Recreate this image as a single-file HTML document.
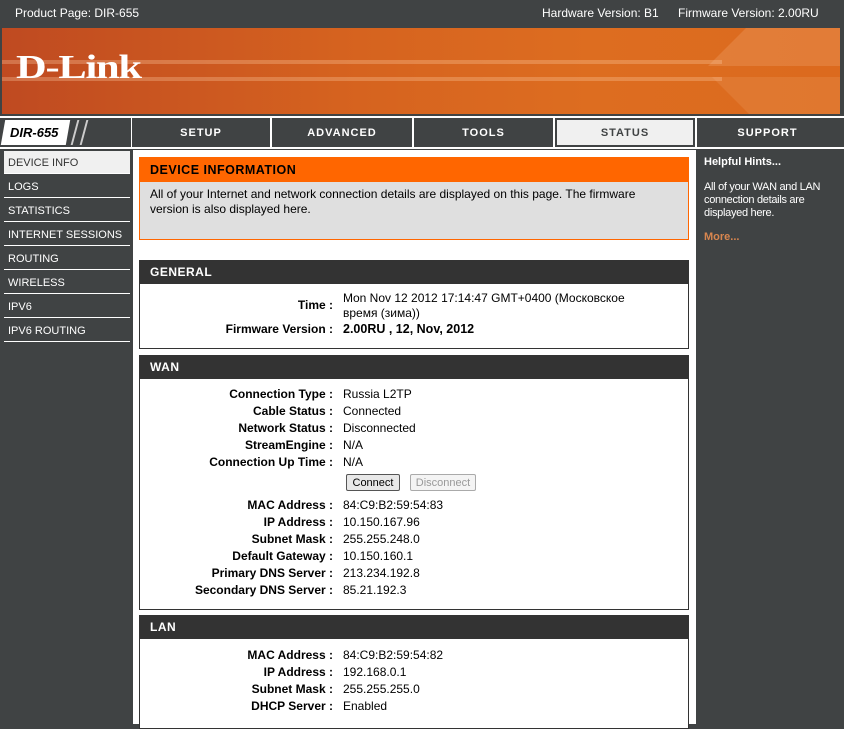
<!DOCTYPE html>
<html><head><meta charset="utf-8"><style>
*{margin:0;padding:0;box-sizing:border-box}
body{width:844px;height:724px;overflow:hidden;background:#404344;font-family:"Liberation Sans",sans-serif;font-size:12px;position:relative}
.a{position:absolute}
#top{left:2px;top:2px;width:838px;height:23px;background:#404344;color:#fff;font-size:12px;line-height:23px}
#ban{left:2px;top:28px;width:838px;height:86px;background:linear-gradient(90deg,#bf4a21 0%,#d5621f 40%,#dd6d20 70%,#dc6a1e 100%);overflow:hidden}
.wl{position:absolute;left:0;height:4px;background:rgba(255,210,170,.3)}
#logo{left:16px;top:49px;color:#fff;font:bold 34px "Liberation Serif",serif;letter-spacing:-1px;transform:scaleX(1.25);transform-origin:left top}
.tab{position:absolute;top:118px;height:29px;background:#404344;color:#fff;font-weight:bold;font-size:11px;letter-spacing:1px;text-align:center;line-height:30px}
.side{position:absolute;left:4px;width:126px;height:23px;border-bottom:1px solid #fff;color:#fff;font-size:11px;line-height:24px;padding-left:4px}
.hd{position:absolute;left:139px;width:550px;height:24px;background:#333;color:#fff;font-weight:bold;font-size:12px;line-height:24px;padding-left:11px;letter-spacing:.5px}
.bx{position:absolute;left:139px;width:550px;background:#fff;border:1px solid #333;border-top:0}
.l{position:absolute;right:511px;font-weight:bold;color:#000;white-space:nowrap;text-align:right}
.v{position:absolute;left:343px;color:#000;white-space:nowrap}
</style></head><body>
<div class="a" id="top"><span class="a" style="left:13px">Product Page: DIR-655</span><span class="a" style="left:540px">Hardware Version: B1</span><span class="a" style="left:676px">Firmware Version: 2.00RU</span></div>
<div class="a" id="ban">
<div class="wl" style="top:32px;width:720px"></div>
<div class="wl" style="top:49px;width:720px"></div>
<div class="a" style="left:730px;top:-10px;width:160px;height:48px;background:rgba(255,210,170,.18);transform:skewX(-45deg)"></div>
<div class="a" style="left:730px;top:49px;width:160px;height:40px;background:rgba(255,210,170,.12);transform:skewX(45deg)"></div>
</div>
<div class="a" id="logo">D-Link</div>
<div class="a" style="left:0;top:116px;width:844px;height:33px;background:#fff"></div>
<div class="a" style="left:0;top:118px;width:131px;height:29px;background:#404344"></div>
<div class="a" style="left:3px;top:120px;width:65px;height:25px;background:#fff;transform:skewX(-10deg)"></div>
<div class="a" style="left:10px;top:120px;line-height:26px;font-weight:bold;font-style:italic;font-size:13px;color:#000">DIR-655</div>
<div class="a" style="left:74px;top:120px;width:2px;height:25px;background:#ccc;transform:skewX(-15deg)"></div>
<div class="a" style="left:83px;top:120px;width:2px;height:25px;background:#ccc;transform:skewX(-15deg)"></div>
<div class="tab" style="left:132px;width:138px">SETUP</div>
<div class="tab" style="left:272px;width:140px">ADVANCED</div>
<div class="tab" style="left:414px;width:139px">TOOLS</div>
<div class="tab" style="left:555px;width:140px"><div style="margin:2px 2px;height:25px;background:#f0f0f0;color:#404344;line-height:26px">STATUS</div></div>
<div class="tab" style="left:697px;width:141px">SUPPORT</div>
<div class="a" style="left:838px;top:118px;width:6px;height:29px;background:#404344"></div>
<div class="side" style="top:151px;background:#f0f0f0;color:#333">DEVICE INFO</div>
<div class="side" style="top:175px">LOGS</div>
<div class="side" style="top:199px">STATISTICS</div>
<div class="side" style="top:223px">INTERNET SESSIONS</div>
<div class="side" style="top:247px">ROUTING</div>
<div class="side" style="top:271px">WIRELESS</div>
<div class="side" style="top:295px">IPV6</div>
<div class="side" style="top:319px">IPV6 ROUTING</div>
<div class="a" style="left:133px;top:150px;width:563px;height:574px;background:#fff"></div>
<div class="a" style="left:139px;top:157px;width:550px;height:83px;background:#dfdfdf;border:1px solid #f60"></div>
<div class="a" style="left:139px;top:157px;width:550px;height:25px;background:#f60;color:#000;font-weight:bold;font-size:12.5px;line-height:27px;padding-left:11px;letter-spacing:.5px">DEVICE INFORMATION</div>
<div class="a" style="left:150px;top:187px;width:515px;line-height:15px;color:#000">All of your Internet and network connection details are displayed on this page. The firmware version is also displayed here.</div>
<div class="hd" style="top:260px">GENERAL</div>
<div class="bx" style="top:284px;height:65px"></div>
<div class="l" style="top:298px">Time :</div>
<div class="v" style="top:291px;line-height:15px;width:300px;white-space:normal">Mon Nov 12 2012 17:14:47 GMT+0400 (Московское время (зима))</div>
<div class="l" style="top:322px">Firmware Version :</div>
<div class="v" style="top:322px;font-weight:bold;font-size:12.5px">2.00RU , 12, Nov, 2012</div>
<div class="hd" style="top:355px">WAN</div>
<div class="bx" style="top:379px;height:231px"></div>
<div class="l" style="top:387px">Connection Type :</div><div class="v" style="top:387px">Russia L2TP</div>
<div class="l" style="top:404px">Cable Status :</div><div class="v" style="top:404px">Connected</div>
<div class="l" style="top:421px">Network Status :</div><div class="v" style="top:421px">Disconnected</div>
<div class="l" style="top:438px">StreamEngine :</div><div class="v" style="top:438px">N/A</div>
<div class="l" style="top:455px">Connection Up Time :</div><div class="v" style="top:455px">N/A</div>
<div class="a" style="left:346px;top:474px;width:54px;height:17px;border:1px solid #555;border-radius:2px;background:#e8e8e8;font-size:11px;text-align:center;line-height:16px">Connect</div>
<div class="a" style="left:410px;top:474px;width:66px;height:17px;border:1px solid #aaa;border-radius:2px;background:#f4f4f4;color:#999;font-size:11px;text-align:center;line-height:16px">Disconnect</div>
<div class="l" style="top:498px">MAC Address :</div><div class="v" style="top:498px">84:C9:B2:59:54:83</div>
<div class="l" style="top:515px">IP Address :</div><div class="v" style="top:515px">10.150.167.96</div>
<div class="l" style="top:532px">Subnet Mask :</div><div class="v" style="top:532px">255.255.248.0</div>
<div class="l" style="top:549px">Default Gateway :</div><div class="v" style="top:549px">10.150.160.1</div>
<div class="l" style="top:566px">Primary DNS Server :</div><div class="v" style="top:566px">213.234.192.8</div>
<div class="l" style="top:583px">Secondary DNS Server :</div><div class="v" style="top:583px">85.21.192.3</div>
<div class="hd" style="top:615px">LAN</div>
<div class="bx" style="top:639px;height:90px"></div>
<div class="l" style="top:648px">MAC Address :</div><div class="v" style="top:648px">84:C9:B2:59:54:82</div>
<div class="l" style="top:665px">IP Address :</div><div class="v" style="top:665px">192.168.0.1</div>
<div class="l" style="top:682px">Subnet Mask :</div><div class="v" style="top:682px">255.255.255.0</div>
<div class="l" style="top:699px">DHCP Server :</div><div class="v" style="top:699px">Enabled</div>
<div class="a" style="left:704px;top:156px;color:#fff;font-weight:bold;font-size:11px">Helpful Hints...</div>
<div class="a" style="left:704px;top:181px;width:135px;color:#fff;font-size:11px;line-height:13px;letter-spacing:-.3px">All of your WAN and LAN connection details are displayed here.</div>
<div class="a" style="left:704px;top:231px;color:#d8864f;font-weight:bold;font-size:11px">More...</div>
</body></html>
